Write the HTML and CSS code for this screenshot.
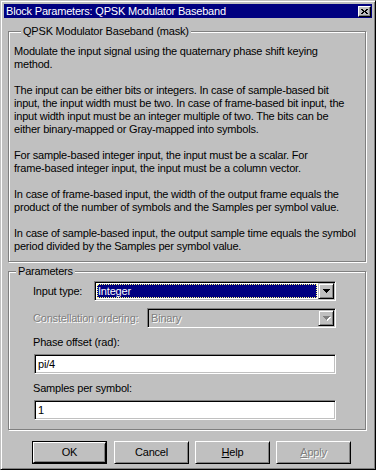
FILE: index.html
```html
<!DOCTYPE html>
<html>
<head>
<meta charset="utf-8">
<link rel="stylesheet" href="styles.css">
</head>
<body>
<div class="win">
  <div class="title">
    <span class="title-text">Block Parameters: QPSK Modulator Baseband</span>
    <span class="close"><svg width="7" height="5" viewBox="0 0 7 5"><path d="M0 0h2v1H0zM5 0h2v1H5zM1 1h2v1H1zM4 1h2v1H4zM2 2h3v1H2zM1 3h2v1H1zM4 3h2v1H4zM0 4h2v1H0zM5 4h2v1H5z" fill="#000"/></svg></span>
  </div>
  <div class="content">
    <div class="group desc">
      <div class="legend">QPSK Modulator Baseband (mask)</div>
      <div class="desc-text">
        <p>Modulate the input signal using the quaternary phase shift keying<br>method.</p>
        <p>The input can be either bits or integers. In case of sample-based bit<br>input, the input width must be two. In case of frame-based bit input, the<br>input width input must be an integer multiple of two. The bits can be<br>either binary-mapped or Gray-mapped into symbols.</p>
        <p>For sample-based integer input, the input must be a scalar. For<br>frame-based integer input, the input must be a column vector.</p>
        <p>In case of frame-based input, the width of the output frame equals the<br>product of the number of symbols and the Samples per symbol value.</p>
        <p>In case of sample-based input, the output sample time equals the symbol<br>period divided by the Samples per symbol value.</p>
      </div>
    </div>
    <div class="group params">
      <div class="legend">Parameters</div>
      <div class="rows">
        <div class="row row-first">
          <span class="lbl lbl-input">Input type:</span>
          <div class="combo">
            <div class="combo-field"><span class="sel">Integer</span></div>
            <span class="drop"><svg width="7" height="4" viewBox="0 0 7 4"><path d="M0 0h7v1H0zM1 1h5v1H1zM2 2h3v1H2zM3 3h1v1H3z" fill="#000"/></svg></span>
          </div>
        </div>
        <div class="row row-second">
          <span class="lbl lbl-const disabled">Constellation ordering:</span>
          <div class="combo combo-disabled">
            <div class="combo-field"><span class="val disabled">Binary</span></div>
            <span class="drop"><svg width="8" height="5" viewBox="0 0 8 5"><path d="M1 1h7v1H1zM2 2h5v1H2zM3 3h3v1H3zM4 4h1v1H4z" fill="#fff"/><path d="M0 0h7v1H0zM1 1h5v1H1zM2 2h3v1H2zM3 3h1v1H3z" fill="#808080"/></svg></span>
          </div>
        </div>
        <div class="lbl lbl-field">Phase offset (rad):</div>
        <div class="edit">pi/4</div>
        <div class="lbl lbl-field">Samples per symbol:</div>
        <div class="edit">1</div>
      </div>
    </div>
    <div class="buttons">
      <div class="btn btn-default"><span class="btn-face">OK</span></div>
      <div class="btn"><span class="btn-face">Cancel</span></div>
      <div class="btn"><span class="btn-face"><u>H</u>elp</span></div>
      <div class="btn"><span class="btn-face disabled"><u>A</u>pply</span></div>
    </div>
  </div>
</div>
</body>
</html>
```

FILE: styles.css
```css
html, body {
  margin: 0;
  padding: 0;
}
body {
  background: #c0c0c0;
  font-family: "Liberation Sans", Arial, sans-serif;
  font-size: 11px;
  letter-spacing: -0.2px;
  line-height: 13px;
  color: #000;
}
.win {
  box-sizing: border-box;
  width: 376px;
  height: 470px;
  border: 1px solid;
  border-color: #c0c0c0 #000 #000 #c0c0c0;
  box-shadow: inset 1px 1px #fff, inset -1px -1px #808080;
  padding: 3px;
  display: flex;
  flex-direction: column;
  background: #c0c0c0;
  overflow: hidden;
}
.title {
  height: 14px;
  flex: none;
  background: #000080;
  color: #fff;
  display: flex;
  align-items: center;
  justify-content: space-between;
  padding-left: 2px;
  line-height: 14px;
}
.close {
  box-sizing: border-box;
  width: 13px;
  height: 11px;
  margin-right: 1px;
  border: 1px solid;
  border-color: #fff #000 #000 #fff;
  box-shadow: inset -1px -1px #808080;
  background: #c0c0c0;
  display: flex;
  align-items: center;
  justify-content: center;
}
.close svg { display: block; }
.content {
  padding: 13px 6px 0 4px;
  display: flex;
  flex-direction: column;
}
.group {
  border: 1px solid #808080;
  box-shadow: inset 1px 1px #fff, 1px 1px #fff;
  display: flex;
  flex-direction: column;
}
.legend {
  align-self: flex-start;
  margin: -7px 0 0 7px;
  padding: 0 2px;
  background: #c0c0c0;
  line-height: 13px;
  height: 13px;
}
.desc {
  padding: 0 0 8px 5px;
}
.desc-text {
  margin-top: 7px;
}
.desc-text p {
  margin: 0;
}
.desc-text p + p {
  margin-top: 13px;
}
.params {
  margin-top: 9px;
  padding-bottom: 9px;
}
.rows {
  display: flex;
  flex-direction: column;
  padding: 0 29px 0 24px;
}
.row {
  display: flex;
  align-items: center;
}
.row-first { margin-top: 3px; }
.row-second { margin-top: 7px; }
.lbl-input { width: 61px; flex: none; }
.lbl-const { width: 114px; flex: none; }
.lbl-field { margin-top: 8px; }
.disabled {
  color: #808080;
  text-shadow: 1px 1px 0 #fff;
}
.combo {
  flex: 1;
  box-sizing: border-box;
  height: 20px;
  border: 1px solid;
  border-color: #808080 #fff #fff #808080;
  box-shadow: inset 1px 1px #000, inset -1px -1px #c0c0c0;
  padding: 1px;
  display: flex;
  background: #fff;
}
.combo-disabled { background: #c0c0c0; }
.combo-field {
  flex: 1;
  padding: 1px;
  display: flex;
}
.sel {
  flex: 1;
  box-sizing: border-box;
  background: #000080;
  color: #fff;
  border: 1px dotted #ffff7f;
  line-height: 12px;
  padding-left: 0;
}
.val {
  padding-left: 1px;
  line-height: 14px;
}
.drop {
  box-sizing: border-box;
  width: 16px;
  height: 16px;
  flex: none;
  border: 1px solid;
  border-color: #c0c0c0 #000 #000 #c0c0c0;
  box-shadow: inset 1px 1px #fff, inset -1px -1px #808080;
  background: #c0c0c0;
  display: flex;
  align-items: center;
  justify-content: center;
  padding-left: 1px;
}
.drop svg { display: block; }
.combo-disabled .drop svg { margin-left: 1px; margin-top: 1px; }
.edit {
  box-sizing: border-box;
  height: 20px;
  margin-top: 5px;
  margin-left: 1px;
  border: 1px solid;
  border-color: #808080 #fff #fff #808080;
  box-shadow: inset 1px 1px #000, inset -1px -1px #c0c0c0;
  background: #fff;
  padding: 2px 3px;
  line-height: 14px;
}
.buttons {
  margin-top: 11px;
  padding-left: 24px;
  display: flex;
  gap: 6px;
}
.btn {
  box-sizing: border-box;
  width: 75px;
  height: 23px;
  display: flex;
}
.btn-default {
  border: 1px solid #000;
  margin-right: 1px;
}
.btn-face {
  flex: 1;
  box-sizing: border-box;
  border: 1px solid;
  border-color: #fff #000 #000 #fff;
  box-shadow: inset 1px 1px #c0c0c0, inset -1px -1px #808080;
  display: flex;
  align-items: center;
  justify-content: center;
  line-height: 13px;
}
```
